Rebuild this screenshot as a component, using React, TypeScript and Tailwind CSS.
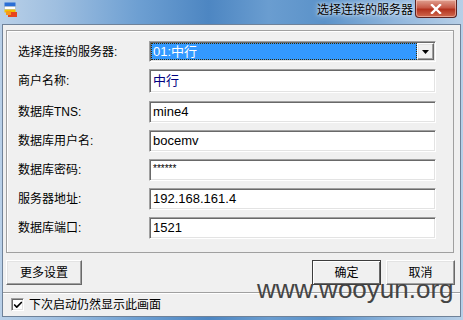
import { Check } from "lucide-react";

const sunken =
  "border border-t-[#a0a0a0] border-l-[#a0a0a0] border-b-white border-r-white shadow-[inset_1px_1px_0_#696969,inset_-1px_-1px_0_#e3e3e3]";

const raised =
  "border border-t-white border-l-white border-b-[#696969] border-r-[#696969] shadow-[inset_-1px_-1px_0_#a0a0a0,inset_1px_1px_0_#e3e3e3]";

const fields = [
  { label: "商户名称:", value: "中行", navy: true, h: "h-[24px]" },
  { label: "数据库TNS:", value: "mine4", h: "h-[22px] mt-px" },
  { label: "数据库用户名:", value: "bocemv", h: "h-[22px]" },
  { label: "数据库密码:", value: "******", h: "h-[22px]", small: true },
  { label: "服务器地址:", value: "192.168.161.4", h: "h-[22px]" },
  { label: "数据库端口:", value: "1521", h: "h-[22px]" },
];

const AppIcon = () => (
  <svg width="14" height="16" viewBox="0 0 14 16">
    <rect x="0.5" y="0.5" width="11" height="4" fill="#2b6fd6" />
    <rect x="0.5" y="4.5" width="11" height="3" fill="#ffffff" stroke="#9ab" strokeWidth="0.5" />
    <rect x="0.5" y="7.5" width="11" height="3" fill="#f2c200" />
    <rect x="4" y="10" width="9" height="5" fill="#e8461e" />
    <rect x="2" y="9" width="5" height="4" fill="#f59a1c" />
  </svg>
);

const TitleBar = () => (
  <div className="h-[24px] relative flex items-start">
    <div className="ml-[4px] mt-[2px]">
      <AppIcon />
    </div>
    <div className="ml-auto mt-[3px] mr-[2px] text-[12px] leading-[14px] text-black [text-shadow:0_0_6px_#e6f0fa,0_0_3px_#e6f0fa]">
      选择连接的服务器
    </div>
    <div className="w-[42px] h-[18px] mr-[6px] rounded-b-[4px] border border-t-0 border-[#5a2222] bg-[linear-gradient(#e0a090,#c75a48_45%,#b3321e_55%,#d06a50)] flex items-center justify-center shadow-[inset_0_0_0_1px_rgba(255,220,210,0.5)]">
      <svg width="12" height="10" viewBox="0 0 12 10">
        <path d="M2 1 L10 9 M10 1 L2 9" stroke="#fff" strokeWidth="2.4" strokeLinecap="square" />
      </svg>
    </div>
  </div>
);

const Field = ({
  label,
  value,
  navy,
  h,
  small,
}: {
  label: string;
  value: string;
  navy?: boolean;
  h: string;
  small?: boolean;
}) => (
  <div className={`flex items-center ${h}`}>
    <div className="w-[131px] text-[12px]">{label}</div>
    <div className={`w-[287px] h-full bg-white flex items-center pl-[3px] ${sunken}`}>
      <span
        className={`${small ? "text-[10px] pb-[4px]" : "text-[13px]"} ${
          navy ? "text-[#000080]" : "text-black"
        }`}
      >
        {value}
      </span>
    </div>
  </div>
);

export default function App() {
  return (
    <div className="w-[463px] h-[320px] relative overflow-hidden flex flex-col font-['Liberation_Sans','Noto_Sans_CJK_SC',sans-serif] bg-[linear-gradient(90deg,#b9d0e8_0%,#9fbfe0_12%,#6d9fd2_30%,#4d86c2_45%,#6a9dd0_58%,#5b92c9_70%,#8fb5dc_85%,#b7cfe7_100%)]">
      <TitleBar />
      <div className="mx-[2px] h-[293px] border border-[#6f8299] bg-[#f0f0f0] flex flex-col">
        <div className="mt-[5px] ml-[3px] w-[448px] h-[223px] border border-[#a0a0a0] shadow-[inset_1px_1px_0_#ffffff] flex flex-col gap-[7px] pt-[10px] pl-[11px]">
          <div className="flex items-center h-[21px]">
            <div className="w-[131px] text-[12px]">选择连接的服务器:</div>
            <div className={`w-[287px] h-full bg-white flex p-[1px] ${sunken}`}>
              <div className="flex-1 bg-[#3399ff] border border-dotted border-[#3a2a00] flex items-center pl-[1px] text-[13px] text-white">
                01:中行
              </div>
              <div className={`w-[17px] h-full bg-[#f0f0f0] flex items-center justify-center ${raised}`}>
                <svg width="7" height="4" viewBox="0 0 7 4">
                  <path d="M0 0 H7 L3.5 4 Z" fill="#000" />
                </svg>
              </div>
            </div>
          </div>
          {fields.map((f) => (
            <Field key={f.label} {...f} />
          ))}
        </div>

        <div className="mt-[7px] flex h-[25px]">
          <button className={`ml-[3px] w-[76px] h-full bg-[#f0f0f0] text-[12px] ${raised}`}>
            更多设置
          </button>
          <button className="ml-auto w-[69px] h-full bg-[#f0f0f0] text-[12px] border border-[#3c3c3c] shadow-[inset_1px_1px_0_#ffffff,inset_-1px_-1px_0_#696969]">
            确定
          </button>
          <button className={`ml-[5px] mr-[5px] w-[69px] h-full bg-[#f0f0f0] text-[12px] ${raised}`}>
            取消
          </button>
        </div>

        <div className="mt-[7px] h-px bg-[#a0a0a0] shadow-[0_1px_0_#ffffff]" />

        <div className="flex-1 flex items-center pl-[8px]">
          <div className={`w-[13px] h-[13px] bg-white flex items-center justify-center ${sunken}`}>
            <Check size={10} strokeWidth={4} className="text-black" />
          </div>
          <span className="ml-[5px] text-[12px]">下次启动仍然显示此画面</span>
        </div>
      </div>

      {/* watermark over the bottom-right corner */}
      <div className="absolute left-[257px] top-[281px] text-[26px] leading-[16px] text-[#444444] font-['Liberation_Sans',sans-serif]">
        www.wooyun.org
      </div>
    </div>
  );
}
